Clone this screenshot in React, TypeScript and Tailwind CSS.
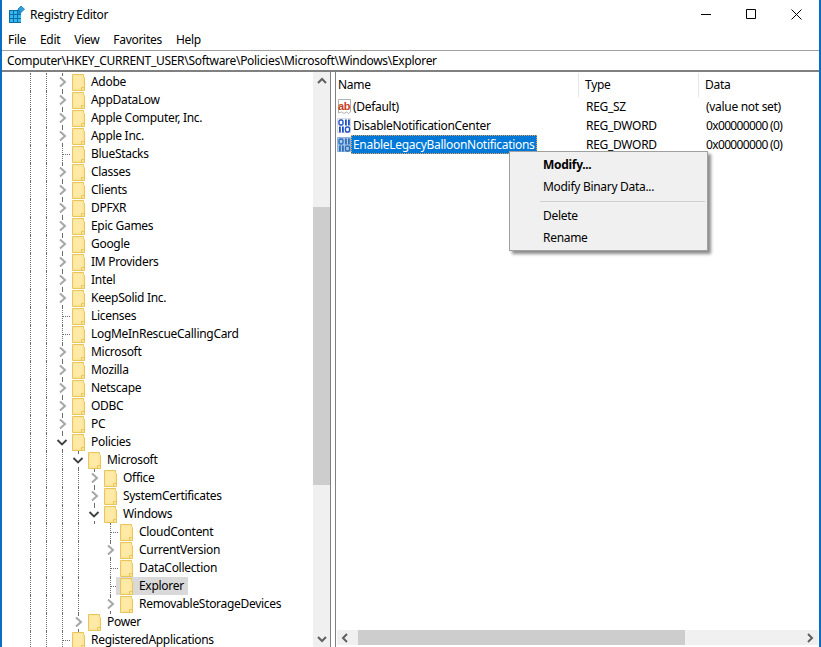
// Registry Editor window
type TreeRow = { label: string; level: number; kind: "closed" | "open" | "leaf"; selected?: boolean }

const rows: TreeRow[] = [
  { label: "Adobe", level: 0, kind: "closed" },
  { label: "AppDataLow", level: 0, kind: "closed" },
  { label: "Apple Computer, Inc.", level: 0, kind: "closed" },
  { label: "Apple Inc.", level: 0, kind: "closed" },
  { label: "BlueStacks", level: 0, kind: "leaf" },
  { label: "Classes", level: 0, kind: "closed" },
  { label: "Clients", level: 0, kind: "closed" },
  { label: "DPFXR", level: 0, kind: "closed" },
  { label: "Epic Games", level: 0, kind: "closed" },
  { label: "Google", level: 0, kind: "closed" },
  { label: "IM Providers", level: 0, kind: "closed" },
  { label: "Intel", level: 0, kind: "closed" },
  { label: "KeepSolid Inc.", level: 0, kind: "closed" },
  { label: "Licenses", level: 0, kind: "leaf" },
  { label: "LogMeInRescueCallingCard", level: 0, kind: "leaf" },
  { label: "Microsoft", level: 0, kind: "closed" },
  { label: "Mozilla", level: 0, kind: "closed" },
  { label: "Netscape", level: 0, kind: "closed" },
  { label: "ODBC", level: 0, kind: "closed" },
  { label: "PC", level: 0, kind: "closed" },
  { label: "Policies", level: 0, kind: "open" },
  { label: "Microsoft", level: 1, kind: "open" },
  { label: "Office", level: 2, kind: "closed" },
  { label: "SystemCertificates", level: 2, kind: "closed" },
  { label: "Windows", level: 2, kind: "open" },
  { label: "CloudContent", level: 3, kind: "leaf" },
  { label: "CurrentVersion", level: 3, kind: "closed" },
  { label: "DataCollection", level: 3, kind: "leaf" },
  { label: "Explorer", level: 3, kind: "leaf", selected: true },
  { label: "RemovableStorageDevices", level: 3, kind: "closed" },
  { label: "Power", level: 1, kind: "closed" },
  { label: "RegisteredApplications", level: 0, kind: "leaf" },
]

const Guide = () => (
  <span className="block w-4 h-[18px] shrink-0 pl-2">
    <span className="block h-full border-l border-dotted border-[#6e6e6e]" />
  </span>
)

const Blank = () => <span className="block w-4 h-[18px] shrink-0" />

const LeafStub = () => (
  <span className="flex w-4 h-[18px] shrink-0 pl-2">
    <span className="block h-full border-l border-dotted border-[#6e6e6e]" />
    <span className="block w-[7px] self-center border-t border-dotted border-[#6e6e6e]" />
  </span>
)

const Expander = ({ open }: { open: boolean }) => (
  <span className="flex flex-col items-start w-4 h-[18px] shrink-0">
    <span className="block h-[2px] ml-2 border-l border-dotted border-[#6e6e6e]" />
    <svg width="16" height="14" viewBox="0 0 16 14" fill="none">
      {open ? (
        <path d="M3.500 5l4.500 4.500L12.500 5" stroke="#404040" strokeWidth="1.8" />
      ) : (
        <path d="M6 2.500l5 4.500-5 4.500" stroke="#a6a6a6" strokeWidth="2" />
      )}
    </svg>
    <span className="block h-[2px] ml-2 border-l border-dotted border-[#6e6e6e]" />
  </span>
)

const Folder = () => (
  <svg width="13" height="17" viewBox="0 0 13 17" className="shrink-0">
    <path d="M.5.5h11v2l1 1v13H.5z" fill="#fde594" stroke="#e8c65c" />
    <path d="M1.500 1.500h9v13h-9z" fill="#fee9a6" />
    <path d="M9.500 13.500h3v3h-3z" fill="#fde594" stroke="#e8c65c" />
  </svg>
)

const TreeItem = ({ row }: { row: TreeRow }) => {
  const cells = []
  for (let i = 0; i < row.level; i++) {
    cells.push(i === 2 ? <Blank key={i} /> : <Guide key={i} />)
  }
  return (
    <div className="flex items-center h-[18px]">
      <Guide />
      <Guide />
      {cells}
      {row.kind === "leaf" ? <LeafStub /> : <Expander open={row.kind === "open"} />}
      <div className={row.selected ? "flex items-center h-[18px] -ml-[2px] pl-[4px] pr-[4px] bg-[#d9d9d9]" : "flex items-center h-[18px] pl-[2px] pr-[4px]"}>
        <Folder />
        <span className="pl-[6px] whitespace-nowrap">{row.label}</span>
      </div>
    </div>
  )
}

const ArrowIcon = ({ d }: { d: string }) => (
  <svg width="16" height="16" viewBox="0 0 16 16" fill="none">
    <path d={d} stroke="#606060" strokeWidth="2" />
  </svg>
)

const AppIcon = () => (
  <svg width="16" height="17" viewBox="0 0 16 17" className="shrink-0 mb-[2px]">
    <rect x="0" y="4" width="12" height="13" fill="#0b6ea8" />
    <path d="M1 5h3v3H1zM5 5h3v3H5zM1 9h3v3H1zM5 9h3v3H5zM9 9h3v3H9zM1 13h3v3H1zM5 13h3v3H5zM9 13h3v3H9z" fill="#35b6ee" />
    <path d="M9 5h3v3H9z" fill="#1f8fd0" />
    <path d="M12 0l3.500 3.200L12 6.400 8.800 3.200z" fill="#2f9fdc" stroke="#0b6ea8" strokeWidth=".7" />
  </svg>
)

const StringIcon = () => (
  <svg width="16" height="18" viewBox="0 0 16 18" className="shrink-0">
    <path d="M1.500 1.500h12v12.500l-2 1.500-2-1.500-2.500 1.500-2.500-1.500-3 1z" fill="#fff" stroke="#b0b0b0" />
    <text x="1" y="11.500" fontSize="11" fontWeight="700" fill="#c8401c" fontFamily="'Liberation Sans', sans-serif">ab</text>
  </svg>
)

const BinaryIcon = ({ selected }: { selected?: boolean }) => {
  const color = selected ? "#2f6fb8" : "#1f50c8"
  return (
    <svg width="16" height="18" viewBox="0 0 16 18" className="shrink-0">
      <path d="M.5 1.500h13v14H.5z" fill={selected ? "#a9c8ea" : "#fff"} stroke={selected ? "#8fb5de" : "#dcdcdc"} />
      <rect x="2" y="3" width="4" height="5" rx="1.500" fill="none" stroke={color} strokeWidth="1.400" />
      <rect x="8" y="2.500" width="1.800" height="6" fill={color} />
      <rect x="11" y="2.500" width="1.800" height="6" fill={color} />
      <rect x="2" y="9.500" width="1.800" height="6" fill={color} />
      <rect x="5" y="9.500" width="1.800" height="6" fill={color} />
      <rect x="8.500" y="10" width="4" height="5" rx="1.500" fill="none" stroke={color} strokeWidth="1.400" />
    </svg>
  )
}

const ValueRow = ({ name, type, data, icon, selected, hex }: { name: string; type: string; data: string; icon: React.ReactNode; selected?: boolean; hex?: boolean }) => (
  <div className="flex items-center h-[19px]">
    <div className="flex items-center w-[243px] pl-[1px] shrink-0">
      {icon}
      {selected ? (
        <span className="h-[19px] ml-[-2px] px-[2px] flex items-center bg-[#0078d7] text-white outline-1 outline-dotted -outline-offset-1 outline-[#e8a050]">{name}</span>
      ) : (
        <span>{name}</span>
      )}
    </div>
    <div className="w-[120px] pl-[7px] shrink-0">{type}</div>
    <div className={hex ? "pl-[7px] whitespace-nowrap tracking-[-0.65px]" : "pl-[7px] whitespace-nowrap"}>{data}</div>
  </div>
)

const App = () => {
  return (
    <div className="flex flex-col w-[821px] h-[647px] overflow-hidden bg-white border-x-2 border-[#0a6cc4] text-[12px] tracking-[-0.3px] text-black font-['Noto_Sans',sans-serif]">
      <div className="flex items-center h-[30px] shrink-0 pl-[7px]">
        <AppIcon />
        <span className="pl-[5px]">Registry Editor</span>
        <div className="flex items-center gap-[35px] ml-auto pr-[17px] mb-[2px]">
          <svg width="10" height="10" viewBox="0 0 10 10"><path d="M0 5.500h10" stroke="#000" /></svg>
          <svg width="10" height="10" viewBox="0 0 10 10" fill="none"><path d="M.5.500h9v9h-9z" stroke="#000" /></svg>
          <svg width="11" height="11" viewBox="0 0 11 11" fill="none"><path d="M.5.500l10 10m0-10l-10 10" stroke="#000" /></svg>
        </div>
      </div>
      <div className="flex items-center gap-[14px] h-[20px] shrink-0 pl-[6px]">
        <span>File</span>
        <span>Edit</span>
        <span>View</span>
        <span>Favorites</span>
        <span>Help</span>
      </div>
      <div className="flex items-center h-[22px] shrink-0 pl-[5px] border-t border-b-2 border-t-[#a0a0a0] border-b-[#808080] whitespace-nowrap">
        {"Computer\\HKEY_CURRENT_USER\\Software\\Policies\\Microsoft\\Windows\\Explorer"}
      </div>
      <div className="flex flex-1 min-h-0 relative">
        <div className="w-[311px] shrink-0 overflow-hidden pl-[20px] pt-[1px]">
          {rows.map((row, i) => <TreeItem key={i} row={row} />)}
        </div>
        <div className="flex flex-col items-center w-[17px] shrink-0 bg-[#f0f0f0]">
          <div className="flex items-center justify-center h-[17px] shrink-0"><ArrowIcon d="M4 10l4-4 4 4" /></div>
          <div className="h-[118px] shrink-0" />
          <div className="w-full h-[278px] shrink-0 bg-[#cdcdcd]" />
          <div className="flex-1" />
          <div className="flex items-center justify-center h-[17px] shrink-0"><ArrowIcon d="M4 6l4 4 4-4" /></div>
        </div>
        <div className="w-[6px] shrink-0 border-x border-[#808080]" />
        <div className="flex flex-col flex-1 min-w-0">
          <div className="flex h-[25px] shrink-0 pt-[1px]">
            <div className="flex items-center w-[243px] pl-[2px] border-r border-[#e5e5e5] shrink-0">Name</div>
            <div className="flex items-center w-[120px] pl-[6px] border-r border-[#e5e5e5] shrink-0">Type</div>
            <div className="flex items-center pl-[6px]">Data</div>
          </div>
          <div className="flex-1 min-h-0">
            <ValueRow name="(Default)" type="REG_SZ" data="(value not set)" icon={<StringIcon />} />
            <ValueRow name="DisableNotificationCenter" type="REG_DWORD" data="0x00000000 (0)" icon={<BinaryIcon />} hex />
            <ValueRow name="EnableLegacyBalloonNotifications" type="REG_DWORD" data="0x00000000 (0)" icon={<BinaryIcon selected />} selected hex />
          </div>
          <div className="flex items-center h-[15px] mb-[2px] mr-[1px] ml-[1px] shrink-0 bg-[#f0f0f0]">
            <div className="flex items-center justify-center w-[16px] shrink-0"><ArrowIcon d="M10 4L6 8l4 4" /></div>
            <div className="w-[5px] shrink-0" />
            <div className="w-[327px] h-full shrink-0 bg-[#cdcdcd]" />
            <div className="flex-1" />
            <div className="flex items-center justify-center w-[16px] shrink-0"><ArrowIcon d="M6 4l4 4-4 4" /></div>
          </div>
        </div>
        <div className="absolute left-[507px] top-[79px] flex flex-col w-[199px] h-[100px] bg-[#f0f0f0] border border-[#a0a0a0] shadow-[3px_3px_3px_rgba(0,0,0,0.45)] pt-[2px]">
          <div className="flex items-center h-[22px] pl-[33px] font-bold">Modify...</div>
          <div className="flex items-center h-[22px] pl-[33px]">Modify Binary Data...</div>
          <div className="h-[1px] ml-[30px] mr-[2px] mt-[3px] mb-[3px] bg-[#d0d0d0]" />
          <div className="flex items-center h-[22px] pl-[33px]">Delete</div>
          <div className="flex items-center h-[22px] pl-[33px]">Rename</div>
        </div>
      </div>
    </div>
  )
}

export default App
